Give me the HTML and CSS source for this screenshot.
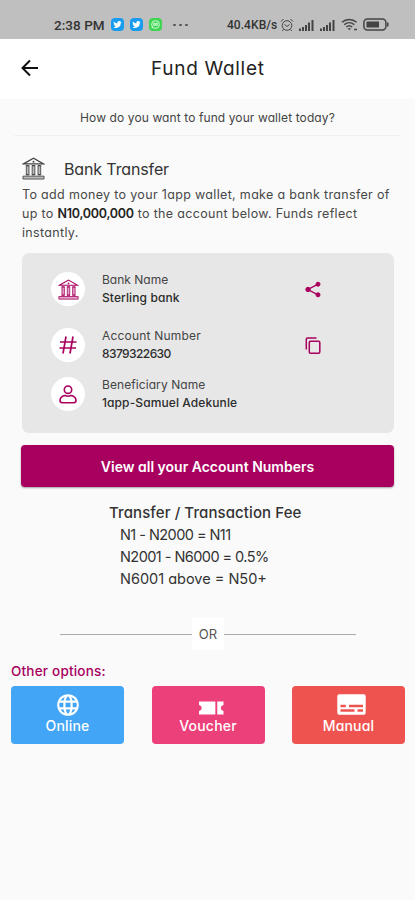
FILE: index.html
```html
<!DOCTYPE html>
<html lang="en">
<head>
<meta charset="utf-8">
<meta name="viewport" content="width=device-width, initial-scale=1">
<title>Fund Wallet</title>
<link rel="stylesheet" href="styles.css">
</head>
<body>
<svg class="defs" width="0" height="0" aria-hidden="true">
  <symbol id="bank" viewBox="0 0 24 24">
    <path d="M1.5 7.2 12 1.2l10.500 6z" fill="none" stroke="currentColor" stroke-width="1.3"/>
    <circle cx="12" cy="5" r="1" fill="currentColor"/>
    <path d="M4 9h3.500M10.200 9h3.600M16.500 9H20M4 18.500h3.500M10.200 18.500h3.600M16.500 18.500H20" fill="none" stroke="currentColor" stroke-width="1"/>
    <path d="M4.500 9h2.800v9.500H4.500zM10.600 9h2.800v9.500h-2.800zM16.700 9h2.800v9.500h-2.800zM1 20h22v3H1z" fill="currentColor" fill-opacity=".35" stroke="currentColor" stroke-width=".9"/>
  </symbol>
  <symbol id="bird" viewBox="0 0 24 24">
    <path fill="#fff" d="M21 6.500c-.7.300-1.400.5-2.100.6.800-.5 1.300-1.200 1.600-2-.7.400-1.500.7-2.300.9a3.700 3.700 0 0 0-6.400 3.400C8.700 9.200 6 7.700 4.100 5.400c-1 1.700-.5 3.900 1.200 5-.6 0-1.200-.2-1.700-.5 0 1.800 1.200 3.400 3 3.800-.5.100-1.100.1-1.700 0 .5 1.500 1.900 2.500 3.500 2.600A7.500 7.500 0 0 1 3 17.900 10.500 10.500 0 0 0 19.200 8.500c.7-.5 1.300-1.200 1.800-2z"/>
  </symbol>
  <symbol id="signal" viewBox="0 0 16 12">
    <path d="M1 9.500h2V12H1zM4 8h2v4H4zM7 6h2v6H7zM10 3.500h2V12h-2zM13.500 1h2v11h-2z" fill="currentColor"/>
  </symbol>
</svg>

<header class="status">
  <span class="time">2:38 PM</span>
  <span class="badge blue"><svg viewBox="0 0 24 24"><use href="#bird"/></svg></span>
  <span class="badge blue"><svg viewBox="0 0 24 24"><use href="#bird"/></svg></span>
  <span class="badge green"><svg viewBox="0 0 24 24" fill="none" stroke="#d8ffdc" stroke-width="2"><circle cx="12" cy="12" r="8.500"/><path d="m4.500 20 1-4M8 9h3v5H8zM13 9h3v5h-3z"/></svg></span>
  <span class="dots"><i></i><i></i><i></i></span>
  <span class="speed">40.4KB/s</span>
  <svg class="alarm" viewBox="0 0 14 14" fill="none" stroke="currentColor"><circle cx="7" cy="7.500" r="4.800"/><path d="M1 3.500 3.500 1M13 3.500 10.500 1M4.500 6.500 7 8.500l2.500-2M3.500 11.500 2.300 13M10.500 11.500l1.200 1.500"/></svg>
  <svg class="bars" viewBox="0 0 16 12"><use href="#signal"/></svg>
  <svg class="bars second" viewBox="0 0 16 12"><use href="#signal"/></svg>
  <svg class="wifi" viewBox="0 0 17 13" fill="none" stroke="currentColor" stroke-width="1.500"><path d="M1 4.300c4-3.800 10.500-3.800 14.500 0M3.200 6.700c3-2.700 7.100-2.700 10.100 0M5.300 9c1.800-1.600 4.100-1.600 5.900 0"/><path d="m6.500 10.300 1.800 2 1.800-2z" fill="currentColor" stroke="none"/><path d="M13 11.500h3" /></svg>
  <svg class="battery" viewBox="0 0 26 13"><rect x=".9" y=".9" width="22" height="11" rx="3.500" fill="none" stroke="currentColor" stroke-width="1.500"/><path d="M3.500 3.500h12.500v6H3.500zM24 4.500h1.500v4H24z" fill="currentColor"/></svg>
</header>

<nav class="appbar">
  <svg class="back" viewBox="0 0 18 18" fill="none" stroke="#111" stroke-width="2"><path d="M17 9H2M9 1.500 1.500 9 9 16.500"/></svg>
  <h1>Fund Wallet</h1>
</nav>

<main>
  <p class="question"><span>How do you want to fund your wallet today?</span></p>

  <section class="transfer">
    <div class="heading">
      <svg viewBox="0 0 24 24"><use href="#bank"/></svg>
      <h2>Bank Transfer</h2>
    </div>
    <p class="intro"><span>To add money to your 1app wallet, make a bank transfer of</span><br><span>up to <b>N10,000,000</b> to the account below. Funds reflect</span><br><span>instantly.</span></p>

    <div class="card">
      <div class="row">
        <span class="disc"><svg class="i-bank" viewBox="0 0 24 24"><use href="#bank"/></svg></span>
        <div class="info"><span>Bank Name</span><strong>Sterling bank</strong></div>
        <svg class="action" viewBox="0 0 16 16" fill="currentColor" stroke="currentColor"><path d="M13 2.700 3 8l10 5.300" fill="none" stroke-width="1.400"/><circle cx="13" cy="2.700" r="2"/><circle cx="3" cy="8" r="2.200"/><circle cx="13" cy="13.300" r="2"/></svg>
      </div>
      <div class="row">
        <span class="disc"><svg class="i-hash" viewBox="0 0 18 18" fill="none" stroke="currentColor" stroke-width="1.700"><path d="M1 6h16.500M.5 12h16.500M7 .5 4 17.500M14 .5l-3 17"/></svg></span>
        <div class="info"><span class="number">Account Number</span><strong class="digits">8379322630</strong></div>
        <svg class="action" viewBox="0 0 16 17" fill="none" stroke="currentColor" stroke-width="1.500"><path d="M1.300 12.500V2.300c0-.7.500-1.200 1.200-1.200h9"/><rect x="4.300" y="4.200" width="10.500" height="12" rx="1.200"/></svg>
      </div>
      <div class="row">
        <span class="disc"><svg class="i-user" viewBox="0 0 18 19" fill="none" stroke="currentColor" stroke-width="1.600"><circle cx="9" cy="4.700" r="3.700"/><path d="M1 15.300c0-3 3-4.800 5.300-4.800 1.500.8 3.900.8 5.400 0 2.300 0 5.300 1.800 5.300 4.800 0 1.600-1 2.500-2.300 2.500H3.300C2 17.800 1 16.900 1 15.300z"/></svg></span>
        <div class="info"><span class="person">Beneficiary Name</span><strong class="owner">1app-Samuel Adekunle</strong></div>
      </div>
    </div>

    <button class="primary"><span>View all your Account Numbers</span></button>
  </section>

  <section class="fees">
    <h3>Transfer / Transaction Fee</h3>
    <ul>
      <li>N1 - N2000 = N11</li>
      <li>N2001 - N6000 = 0.5%</li>
      <li class="above">N6001 above = N50+</li>
    </ul>
  </section>

  <div class="divider"><span>OR</span></div>

  <section class="others">
    <h4>Other options:</h4>
    <div class="options">
      <button class="option online">
        <svg width="22" height="22" viewBox="0 0 22 22"><circle cx="11" cy="11" r="10.800" fill="#fff"/><path fill="#42a5f5" d="M8.800 6.500c.5-2 1.300-3.700 2.200-4.300.9.600 1.700 2.300 2.200 4.300zM8.500 8.700h5v4.600h-5zM8.800 15.500h4.400c-.5 2-1.300 3.700-2.200 4.300-.9-.6-1.700-2.300-2.200-4.300zM2.600 8.700h3.700v4.600H2.600a8 8 0 0 1 0-4.600zM15.700 8.700h3.700a8 8 0 0 1 0 4.600h-3.700zM3.500 6.500A9 9 0 0 1 7.600 3l-1 3.500zM18.500 6.500A9 9 0 0 0 14.400 3l1 3.500zM3.500 15.500A9 9 0 0 0 7.600 19l-1-3.500zM18.500 15.500a9 9 0 0 1-4.100 3.500l1-3.500z"/></svg>
        <span>Online</span>
      </button>
      <button class="option voucher">
        <svg width="25" height="14" viewBox="0 0 26 14" preserveAspectRatio="none" fill="#fff"><path d="M0 .5h17v13H0V10c1.700-.3 2.800-1.500 2.800-3S1.700 4.300 0 4zM19 .5h6.500V4c-1.700.3-2.800 1.500-2.800 3s1.100 2.700 2.800 3v3.500H19z"/></svg>
        <span>Voucher</span>
      </button>
      <button class="option manual">
        <svg width="29" height="21" viewBox="0 0 29 21"><rect x=".3" y=".3" width="28.400" height="20.400" rx="2" fill="#fff"/><path d="M3.500 12h5.300M12 12h14M3.500 16.500h14M20.500 16.500H26" stroke="#ef5350" stroke-width="2.400"/></svg>
        <span>Manual</span>
      </button>
    </div>
  </section>
</main>
</body>
</html>
```

FILE: styles.css
```css
* { box-sizing: border-box; margin: 0; padding: 0; }
body {
  width: 415px;
  height: 900px;
  overflow: hidden;
  background: #fafafa;
  color: #333;
  font-family: Inter, "Liberation Sans", sans-serif;
  font-feature-settings: "cv11" 1;
}
button { border: 0; color: #fff; font: inherit; font-feature-settings: inherit; }
svg { display: block; flex: none; }
.defs { position: absolute; }
span { white-space: nowrap; }

.status {
  display: flex;
  align-items: center;
  height: 39px;
  padding: 10px 0 0 54px;
  background: #bfbfbf;
  color: #444;
  font-family: Roboto, sans-serif;
  font-weight: 500;
}
.time { width: 57px; font-size: 13.5px; letter-spacing: .05px; color: #333; }
.badge { width: 13px; height: 13px; margin-right: 6px; padding: 1px; border-radius: 4px; }
.badge svg { width: 11px; height: 11px; }
.blue { background: #189cf0; }
.green { background: #3fd553; }
.dots { display: flex; gap: 3px; width: 54px; margin-left: 5px; }
.dots i { width: 3px; height: 2px; border-radius: 1px; background: #555; }
.speed { width: 53px; font-size: 12px; letter-spacing: .05px; color: #333; }
.alarm { width: 14px; height: 14px; }
.bars { width: 16px; height: 12px; margin-left: 4px; }
.second { margin-left: 5px; }
.wifi { width: 17px; height: 13px; margin-left: 6px; }
.battery { width: 26px; height: 13px; margin-left: 5px; color: #444; }

.appbar {
  display: flex;
  align-items: center;
  height: 60px;
  padding: 0 0 2px 21px;
  background: #fff;
}
.back { width: 18px; height: 18px; }
h1 { margin-left: 112px; font-size: 19px; font-weight: 400; letter-spacing: .7px; color: #222; }

.question {
  height: 37px;
  margin: 0 14px;
  border-bottom: 1px solid #f1f1f1;
  font-size: 12px;
  letter-spacing: .1px;
  line-height: 38px;
  text-align: center;
  color: #444;
}
.transfer { padding: 21px 21px 0 22px; }
.heading { display: flex; align-items: center; height: 23px; color: #444; }
.heading svg { width: 23px; height: 23px; }
h2 { margin-left: 19px; font-size: 16px; font-weight: 400; letter-spacing: -.13px; color: #333; }
.intro { margin-top: 5px; font-size: 12.5px; letter-spacing: .33px; line-height: 19px; color: #484848; }
.intro b { font-weight: 600; letter-spacing: -.25px; color: #222; }

.card {
  height: 180px;
  margin-top: 11px;
  padding-top: 18px;
  border-radius: 7px;
  background: #e7e7e7;
  color: #a8005f;
}
.row { display: flex; align-items: center; height: 36px; margin-bottom: 20px; padding-left: 29px; }
.row:nth-child(2) { margin-bottom: 13px; }
.disc {
  display: flex;
  align-items: center;
  justify-content: center;
  width: 34px;
  height: 34px;
  border-radius: 50%;
  background: #fff;
}
.i-bank { width: 21px; height: 21px; }
.i-hash { width: 18px; height: 18px; }
.i-user { width: 18px; height: 19px; }
.info {
  display: flex;
  flex-direction: column;
  width: 220px;
  padding-left: 17px;
  font-size: 12px;
  line-height: 18px;
  color: #444;
}
.info span, .info strong { align-self: flex-start; white-space: nowrap; }
.info strong { font-weight: 500; letter-spacing: .1px; color: #2c2c2c; }
.info .number { letter-spacing: .2px; }
.info .person { letter-spacing: .08px; }
.info .digits { letter-spacing: -.58px; }
.action { width: 16px; height: 17px; }

.primary {
  display: block;
  width: 373px;
  height: 42px;
  margin: 12px 0 0 -1px;
  border-radius: 4px;
  background: #a8005f;
  box-shadow: 0 1px 2px rgba(0, 0, 0, .35);
  font-size: 14px;
  font-weight: 600;
}

.fees { padding: 15px 0 0 109px; color: #333; }
h3, li { width: max-content; line-height: 22px; white-space: nowrap; }
h3 { font-size: 15px; font-weight: 500; letter-spacing: .1px; }
ul { padding-left: 11px; list-style: none; }
li { font-size: 14.5px; letter-spacing: -.55px; }
li.above { letter-spacing: 0; }

.divider {
  display: flex;
  align-items: center;
  width: 296px;
  height: 32px;
  margin: 28px 0 0 60px;
  font-size: 13px;
  color: #555;
}
.divider::before, .divider::after { content: ""; flex: 1; height: 1px; background: #aaa; }
.divider span { width: 32px; background: #fff; line-height: 32px; text-align: center; }

.others { padding: 11px 10px 0 11px; }
h4 { width: max-content; font-size: 13.5px; font-weight: 500; letter-spacing: .2px; line-height: 20px; color: #a8005f; }
.options { display: flex; justify-content: space-between; margin-top: 5px; }
.option {
  display: flex;
  flex-direction: column;
  align-items: center;
  justify-content: flex-end;
  width: 113px;
  height: 58px;
  padding-bottom: 8px;
  border-radius: 4px;
  font-size: 14px;
  font-weight: 500;
  letter-spacing: .2px;
  line-height: 20px;
}
.online { background: #42a5f5; }
.voucher { background: #ec407a; }
.manual { background: #ef5350; }
.voucher svg { margin: 0 0 1px 6px; }
.manual svg { margin: 0 0 1px 6px; }
```
